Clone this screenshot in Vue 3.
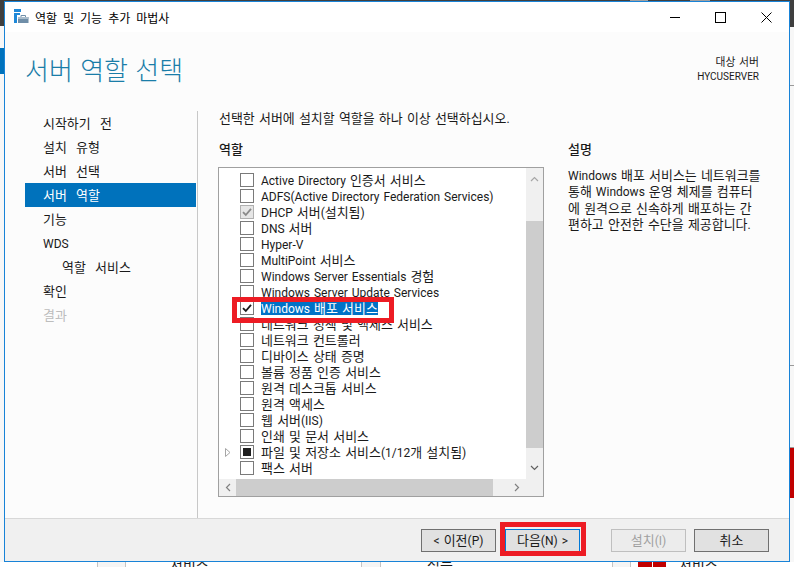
<template>
  <div class="desktop">
    <!-- 창 뒤에 비치는 바탕 화면 -->
    <div class="back-top"></div>
    <div class="back-left-dark"></div>
    <div class="back-left-blue"></div>
    <div class="back-right-dark"></div>
    <div class="back-right-line l1"></div>
    <div class="back-right-line l2"></div>
    <div class="back-right-red"></div>
    <div class="back-table">
      <span class="back-cell c1"></span>
      <span class="back-text t1">서비스</span>
      <span class="back-cell c2"></span>
      <span class="back-text t2">성능</span>
      <span class="back-cell c3"></span>
      <span class="back-red"></span>
      <span class="back-text t3">서비스</span>
    </div>

    <div class="wizard">
      <div class="titlebar">
        <svg class="app-icon" width="16" height="16" viewBox="0 0 16 16">
          <rect x="0" y="0" width="7" height="3" fill="#1e88d8" />
          <rect x="0" y="4" width="6" height="10" fill="#1e88d8" />
          <rect x="3" y="6" width="12" height="8" fill="#fff" />
          <rect x="4" y="8" width="10.5" height="6" fill="#6f8ea8" />
          <rect x="4" y="8" width="10.5" height="2" fill="#a9bccb" />
          <path d="M7 8V6.5h4.5V8" fill="none" stroke="#6f8ea8" />
        </svg>
        <span class="title-text">역할 및 기능 추가 마법사</span>
        <div class="win-buttons">
          <svg width="11" height="11" viewBox="0 0 11 11"><path d="M1 5.5h10" stroke="#000" /></svg>
          <svg width="11" height="11" viewBox="0 0 11 11"><rect x="0.5" y="0.5" width="10" height="10" fill="none" stroke="#000" /></svg>
          <svg width="11" height="11" viewBox="0 0 11 11"><path d="M0.5 0.5l10 10M10.5 0.5l-10 10" stroke="#000" /></svg>
        </div>
      </div>

      <div class="header">
        <h1>서버 역할 선택</h1>
        <div class="target">
          <div><Txt text="대상 서버" /></div>
          <div>HYCUSERVER</div>
        </div>
      </div>

      <div class="main">
        <div class="steps">
          <div
            v-for="step in steps"
            :key="step.label"
            class="step"
            :class="{ active: step.active, sub: step.sub, off: step.off }"
          ><Txt :text="step.label" /></div>
        </div>

        <div class="content">
          <p class="lead"><Txt text="선택한 서버에 설치할 역할을 하나 이상 선택하십시오." /></p>
          <div class="columns">
            <div class="role-col">
              <div class="col-title"><Txt text="역할" /></div>
              <div class="listbox">
                <div class="list-body">
                  <div class="rows">
                    <div v-for="role in roles" :key="role.name" class="row">
                      <span class="expander">
                        <svg v-if="role.expand" width="6" height="9" viewBox="0 0 6 9"><path d="M0.5 0.5L5 4.5L0.5 8.5Z" fill="#fff" stroke="#a6a6a6" /></svg>
                      </span>
                      <span class="check" :class="{ grey: role.state === 'installed' }">
                        <svg v-if="role.state === 'checked' || role.state === 'installed'" width="12" height="12" viewBox="0 0 12 12">
                          <path d="M2 6.2L4.8 9L10 2.8" fill="none" :stroke="role.state === 'checked' ? '#1a1a1a' : '#8a8a8a'" stroke-width="1.8" />
                        </svg>
                        <span v-if="role.state === 'partial'" class="partial"></span>
                      </span>
                      <span class="role-name" :class="{ selected: role.state === 'checked' }"><Txt :text="role.name" /></span>
                    </div>
                  </div>
                  <div class="vscroll">
                    <svg width="9" height="6" viewBox="0 0 9 6"><path d="M1 5L4.5 1.5L8 5" fill="none" stroke="#a6a6a6" stroke-width="1.2" /></svg>
                    <div class="vthumb"></div>
                    <svg width="9" height="6" viewBox="0 0 9 6"><path d="M1 1L4.5 4.5L8 1" fill="none" stroke="#606060" stroke-width="1.2" /></svg>
                  </div>
                </div>
                <div class="hscroll">
                  <svg width="6" height="9" viewBox="0 0 6 9"><path d="M5 1L1.5 4.5L5 8" fill="none" stroke="#808080" stroke-width="1.2" /></svg>
                  <div class="hthumb"></div>
                  <svg width="6" height="9" viewBox="0 0 6 9"><path d="M1 1L4.5 4.5L1 8" fill="none" stroke="#808080" stroke-width="1.2" /></svg>
                </div>
              </div>
            </div>
            <div class="desc-col">
              <div class="col-title"><Txt text="설명" /></div>
              <p v-for="line in descLines" :key="line" class="desc"><Txt :text="line" /></p>
            </div>
          </div>
        </div>
      </div>

      <div class="footer">
        <button class="btn prev"><Txt text="< 이전(P)" /></button>
        <button class="btn next"><Txt text="다음(N) >" /></button>
        <button class="btn install" disabled><Txt text="설치(I)" /></button>
        <button class="btn"><Txt text="취소" /></button>
      </div>
    </div>

    <!-- 스크린샷 위에 그려진 빨간 강조 표시 -->
    <div class="mark mark-role"></div>
    <div class="mark mark-next"></div>
  </div>
</template>

<script setup>
import { h } from 'vue'

// 한글만 조금 크게 보이도록 한글 구간을 span 으로 나눈다
const hangulRun = /([\uAC00-\uD7A3]+(?: [\uAC00-\uD7A3]+)*)/
const Txt = (props) =>
  props.text.split(hangulRun).map((part, i) => (i % 2 ? h('span', { class: 'ko' }, part) : part))
Txt.props = ['text']

const steps = [
  { label: '시작하기 전' },
  { label: '설치 유형' },
  { label: '서버 선택' },
  { label: '서버 역할', active: true },
  { label: '기능' },
  { label: 'WDS' },
  { label: '역할 서비스', sub: true },
  { label: '확인' },
  { label: '결과', off: true }
]

const roles = [
  { name: 'Active Directory 인증서 서비스' },
  { name: 'ADFS(Active Directory Federation Services)' },
  { name: 'DHCP 서버(설치됨)', state: 'installed' },
  { name: 'DNS 서버' },
  { name: 'Hyper-V' },
  { name: 'MultiPoint 서비스' },
  { name: 'Windows Server Essentials 경험' },
  { name: 'Windows Server Update Services' },
  { name: 'Windows 배포 서비스', state: 'checked' },
  { name: '네트워크 정책 및 액세스 서비스' },
  { name: '네트워크 컨트롤러' },
  { name: '디바이스 상태 증명' },
  { name: '볼륨 정품 인증 서비스' },
  { name: '원격 데스크톱 서비스' },
  { name: '원격 액세스' },
  { name: '웹 서버(IIS)' },
  { name: '인쇄 및 문서 서비스' },
  { name: '파일 및 저장소 서비스(1/12개 설치됨)', state: 'partial', expand: true },
  { name: '팩스 서버' }
]

const descLines = [
  'Windows 배포 서비스는 네트워크를',
  '통해 Windows 운영 체제를 컴퓨터',
  '에 원격으로 신속하게 배포하는 간',
  '편하고 안전한 수단을 제공합니다.'
]
</script>

<style>
html,
body {
  margin: 0;
  background: #f7f7f7;
}

.ko {
  font-size: 1.08em;
  line-height: 0;
  word-spacing: 1px;
}

.step .ko {
  word-spacing: 6px;
}
</style>

<style scoped>
.desktop {
  position: relative;
  width: 794px;
  height: 567px;
  overflow: hidden;
  background: #f7f7f7;
  font-family: Roboto, "Noto Sans CJK KR", sans-serif;
  font-size: 12px;
  word-spacing: 1px;
  color: #1a1a1a;
}

.back-top {
  position: absolute;
  left: 0;
  top: 0;
  width: 794px;
  height: 1px;
  background: linear-gradient(90deg, #3f3f3f 630px, #a0a0a0 630px, #a0a0a0 648px, #3f3f3f 648px, #3f3f3f 690px, #a0a0a0 690px, #a0a0a0 710px, #3f3f3f 710px);
}

.back-left-dark {
  position: absolute;
  left: 0;
  top: 0;
  width: 4px;
  height: 26px;
  background: #3f3f3f;
}

.back-left-blue {
  position: absolute;
  left: 0;
  top: 48px;
  width: 4px;
  height: 26px;
  background: #0072bc;
}

.back-right-dark {
  position: absolute;
  right: 0;
  top: 0;
  width: 4px;
  height: 27px;
  background: #3f3f3f;
}

.back-right-line {
  position: absolute;
  right: 0;
  width: 4px;
  height: 1px;
  background: #9a9a9a;
}

.l1 { top: 85px; }
.l2 { top: 365px; }

.back-right-red {
  position: absolute;
  right: 0;
  top: 447px;
  width: 4px;
  height: 50px;
  background: #c00000;
  border-top: 1px solid #9a9a9a;
}

.back-table {
  position: absolute;
  left: 0;
  top: 562px;
  width: 794px;
  height: 5px;
  background: #fff;
  overflow: hidden;
}

.back-cell {
  position: absolute;
  top: 0;
  height: 5px;
  background: #f5f5f5;
  border-left: 1px solid #c4c4c4;
  border-right: 1px solid #c4c4c4;
}

.c1 { left: 97px; width: 27px; }
.c2 { left: 361px; width: 18px; }
.c3 { left: 612px; width: 17px; }

.back-text {
  position: absolute;
  top: -6px;
  font-size: 14px;
  line-height: 18px;
}

.t1 { left: 170px; }
.t2 { left: 427px; }
.t3 { left: 679px; }

.back-red {
  position: absolute;
  left: 638px;
  top: 0;
  width: 28px;
  height: 5px;
  background: linear-gradient(90deg, #c00000 14px, #fff 14px, #fff 15px, #c00000 15px);
}

.wizard {
  position: absolute;
  left: 4px;
  top: 1px;
  width: 786px;
  height: 561px;
  box-sizing: border-box;
  border: 1px solid #1883d7;
  background: #fcfcfc;
  display: flex;
  flex-direction: column;
}

.titlebar {
  height: 30px;
  flex: none;
  background: #fff;
  display: flex;
  align-items: center;
  padding-left: 9px;
}

.app-icon {
  margin-right: 5px;
}

.title-text {
  color: #000;
  word-spacing: 3px;
}

.win-buttons {
  margin-left: auto;
  display: flex;
  gap: 35px;
  padding-right: 17px;
}

.header {
  height: 79px;
  flex: none;
  display: flex;
  justify-content: space-between;
  align-items: flex-start;
  padding: 0 30px 0 20px;
}

.header h1 {
  margin: 20px 0 0;
  font-size: 26px;
  font-weight: 300;
  line-height: 38px;
  color: #1a7da8;
}

.target {
  margin-top: 24px;
  text-align: right;
  font-size: 10px;
  line-height: 14px;
}

.target div {
  height: 14px;
}

.main {
  flex: 1;
  min-height: 0;
  display: flex;
}

.steps {
  width: 173px;
  margin-left: 20px;
  box-sizing: border-box;
  border-right: 1px solid #c8c8c8;
  padding-right: 1px;
}

.step {
  height: 24px;
  line-height: 27px;
  padding-left: 18px;
}

.step.sub {
  padding-left: 37px;
}

.step.active {
  background: #0072bc;
  color: #fff;
}

.step.off {
  color: #bdbdbd;
}

.content {
  flex: 1;
  padding-left: 21px;
  padding-right: 16px;
}

.lead {
  margin: 0;
  height: 24px;
  line-height: 17px;
}

.columns {
  display: flex;
  gap: 24px;
}

.col-title {
  height: 32px;
  line-height: 31px;
  font-weight: 500;
}

.role-col {
  width: 326px;
  flex: none;
  margin-left: -1px;
}

.role-col .col-title {
  padding-left: 1px;
}

.listbox {
  height: 330px;
  box-sizing: border-box;
  border: 1px solid #a0a0a0;
  background: #fff;
  display: flex;
  flex-direction: column;
}

.list-body {
  flex: 1;
  min-height: 0;
  display: flex;
}

.rows {
  flex: 1;
  height: 306px;
  margin-top: 4px;
  overflow: hidden;
}

.row {
  height: 16px;
  display: flex;
  align-items: center;
  white-space: nowrap;
}

.expander {
  width: 21px;
  padding-left: 6px;
  box-sizing: border-box;
  display: flex;
  align-items: center;
  flex: none;
}

.check {
  width: 14px;
  height: 14px;
  box-sizing: border-box;
  border: 1px solid #7a7a7a;
  background: #fff;
  display: flex;
  align-items: center;
  justify-content: center;
  flex: none;
  margin-right: 7px;
}

.check.grey {
  background: #e6e6e6;
  border-color: #b0b0b0;
}

.partial {
  width: 8px;
  height: 8px;
  background: #1f1f1f;
}

.role-name {
  align-self: flex-start;
  margin-top: 1px;
  height: 14px;
  line-height: 17px;
}

.role-name.selected {
  background: #0072c6;
  color: #fff;
}

.vscroll {
  width: 17px;
  flex: none;
  background: #f0f0f0;
  display: flex;
  flex-direction: column;
  align-items: center;
  justify-content: space-between;
  padding: 8px 0;
  box-sizing: border-box;
  position: relative;
}

.vthumb {
  position: absolute;
  left: 0;
  top: 53px;
  width: 17px;
  height: 227px;
  background: #cdcdcd;
}

.hscroll {
  height: 17px;
  flex: none;
  background: #f0f0f0;
  display: flex;
  align-items: center;
  justify-content: space-between;
  padding: 0 23px 0 6px;
  position: relative;
}

.hthumb {
  position: absolute;
  left: 17px;
  top: 0;
  width: 257px;
  height: 17px;
  background: #cdcdcd;
}

.desc-col {
  flex: 1;
}

.desc {
  margin: 0;
  height: 16.3px;
  line-height: 18.3px;
  white-space: nowrap;
}

.footer {
  height: 43px;
  flex: none;
  box-sizing: border-box;
  background: #f0f0f0;
  border-top: 1px solid #d8d8d8;
  display: flex;
  justify-content: flex-end;
  align-items: flex-start;
  gap: 8px;
  padding: 10px 20px 0 0;
}

.btn {
  width: 75px;
  height: 23px;
  padding: 0;
  box-sizing: border-box;
  border: 1px solid #707070;
  background: #e1e1e1;
  font: inherit;
  word-spacing: inherit;
  color: #1a1a1a;
}

.btn.next {
  border-color: #0078d7;
  margin-left: 1px;
}

.btn.install {
  margin-left: 23px;
  border-color: #bfbfbf;
  background: #ececec;
  color: #a0a0a0;
}

.mark {
  position: absolute;
  box-sizing: border-box;
  border: 5px solid #ed1c24;
}

.mark-role {
  left: 232px;
  top: 297px;
  width: 162px;
  height: 26px;
}

.mark-next {
  left: 500px;
  top: 522px;
  width: 86px;
  height: 34px;
}
</style>
